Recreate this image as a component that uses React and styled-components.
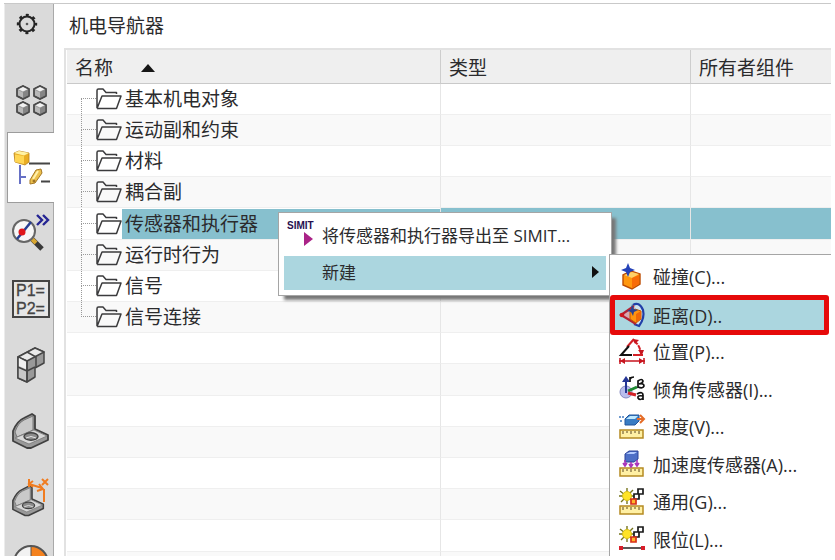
import React from "react";
import styled, { createGlobalStyle, css } from "styled-components";

const Global = createGlobalStyle`
  *, *::before, *::after { box-sizing: border-box; }
  body {
    margin: 0;
    background: #fff;
    color: #2b2b2d;
    font-family: "Open Sans", "Noto Sans CJK SC", sans-serif;
  }
  button { font: inherit; color: inherit; border: 0; padding: 0; margin: 0; background: none; text-align: left; cursor: pointer; }
  svg { display: block; flex: none; overflow: visible; }
`;

const Page = styled.div`
  height: 100vh;
  padding: 3px 4px 4px;
`;

const Frame = styled.div`
  position: relative;
  display: flex;
  height: 100%;
  overflow: hidden;
  border-top: 1px solid #c9c9c9;
`;

const Rail = styled.nav`
  display: flex;
  flex-direction: column;
  width: 50px;
  flex: none;
  background: #dadada;
  border-left: 1px solid #ececec;
`;

const RailButton = styled.button`
  display: flex;
  align-items: center;
  justify-content: center;
  flex: none;
  height: 66px;
  padding: 0 0 6px 3px;
  border-right: 1px solid #a9a9a9;
  ${(p) =>
    p.$kind === "settings" &&
    css`
      height: 64px;
      align-items: flex-start;
      padding: 9px 5px 0 0;
    `}
  ${(p) => p.$kind === "tab" && css`height: 64px; padding: 0 0 0 6px;`}
  ${(p) =>
    p.$active &&
    css`
      height: 71px;
      margin-left: 2px;
      padding: 0 0 0 2px;
      background: #fff;
      border: 1px solid #9c9c9c;
      border-right: 0;
    `}
`;

const Panel = styled.main`
  flex: 1;
  min-width: 0;
  padding-left: 10px;
`;

const Title = styled.h1`
  margin: 0;
  padding-left: 5px;
  height: 44px;
  font-size: 19px;
  line-height: 44px;
  font-weight: 400;
`;

const TableWrap = styled.div`
  border-top: 2px solid #e2e2e2;
  border-left: 2px solid #e2e2e2;
  padding-left: 1px;
`;

const Table = styled.table`
  width: 100%;
  table-layout: fixed;
  border-collapse: separate;
  border-spacing: 0;
  font-size: 19px;
  line-height: 28px;
`;

const Col = styled.col`
  width: ${(p) => p.$width};
`;

const HeadCell = styled.th`
  height: 34px;
  padding: 2px 0 0 8px;
  text-align: left;
  font-weight: 400;
  background: #efefef;
  border-bottom: 1px solid #c9c9c9;
  & + & { border-left: 1px solid #cdcdcd; }
`;

const SortButton = styled.button`
  display: flex;
  align-items: center;
  gap: 28px;
`;

const Cell = styled.td`
  height: 31px;
  padding: 0;
  border-bottom: 1px solid #efefef;
  & + & { border-left: 1px solid #e6e6e6; }
`;

const Row = styled.tr`
  &:nth-child(even) { background: #f9f9f9; }
  &:nth-child(5n) > td { height: 32px; }
  ${(p) =>
    p.$selected &&
    css`
      td + td { background: #87c0ce; }
    `}
`;

const TreeItem = styled.div`
  display: flex;
  align-items: center;
  height: 30px;
`;

const Guide = styled.span`
  display: grid;
  grid-template-rows: 1fr 1fr;
  align-self: stretch;
  width: 15px;
  margin-left: 14px;
  flex: none;
  &::before, &::after { content: ""; border-left: 1px dotted #999; }
  &::before { border-bottom: 1px dotted #999; ${(p) => p.$first && "border-left: 0;"} }
  &::after { ${(p) => p.$last && "border-left: 0;"} }
`;

const TreeLabel = styled.span`
  flex: 1;
  align-self: stretch;
  line-height: 30px;
  padding-left: 3px;
  ${(p) => p.$selected && "background: #87c0ce;"}
`;

const Menu = styled.div`
  position: absolute;
  background: #fff;
  border: 1px solid #a5a5a5;
`;

const ContextMenu = styled(Menu)`
  left: 274px;
  top: 208px;
  width: 334px;
  padding: 4px 5px 5px;
  font-size: 17px;
  box-shadow: 5px 5px 3px -1px #777;
`;

const SubMenu = styled(Menu)`
  left: 605px;
  top: 250px;
  right: 0;
  padding: 4px 3px 4px 1px;
  border-right: 0;
  font-size: 18px;
`;

const MenuItem = styled.button`
  display: flex;
  align-items: center;
  width: 100%;
  height: ${(p) => (p.$tall ? "39px" : "34px")};
  padding-bottom: ${(p) => (p.$tall ? "5px" : "3px")};
  ${(p) => p.$active && "background: #abd6df;"}
`;

const MenuIcon = styled.span`
  display: flex;
  justify-content: center;
  width: 31px;
  margin-right: 7px;
  flex: none;
`;

const MenuText = styled.span`
  flex: 1;
  white-space: nowrap;
`;

const Arrow = styled.span`
  margin-right: 7px;
`;

const SensorItem = styled.button`
  display: flex;
  align-items: center;
  gap: 7px;
  width: 100%;
  height: 37px;
  padding: 0 0 3px 8px;
  white-space: nowrap;
  &:nth-child(even) { height: 38px; }
  ${(p) =>
    p.$marked &&
    css`
      padding: 0 0 0 4px;
      background: #abd6df;
      border: 4px solid #e60a0a;
      border-radius: 2px;
      box-shadow: 0 0 0 1px #e60a0a;
    `}
`;

const FolderIcon = () => (
  <svg width="26" height="22" viewBox="0 0 26 22" fill="none" stroke="#3b3b3d" strokeWidth="1.5" strokeLinejoin="round">
    <path d="M1 20V2.500Q1 1 2.500 1H7l3 3.500h10.500v1.500M1 20.500 6 8h19L20.500 20.500H1" />
  </svg>
);

const GearIcon = () => (
  <svg width="22" height="22" viewBox="0 0 22 22" fill="none" stroke="#252525">
    <circle cx="11" cy="11" r="7.500" strokeWidth="2" />
    <circle cx="11" cy="11" r="9" strokeWidth="2.400" strokeDasharray="3 4.070" strokeDashoffset="1.500" />
    <circle cx="11" cy="11" r="1.300" fill="#555" stroke="none" />
  </svg>
);

const MiniCube = ({ x, y }) => (
  <g transform={`translate(${x} ${y})`} stroke="#4b4b4b" strokeWidth="1.400" strokeLinejoin="round">
    <path d="M1 4 7 1l6 3v7l-6 3-6-3Z" fill="#b8b8b8" />
    <path d="M1 4 7 1l6 3-6 3Z" fill="#f1f1f1" stroke="#777" strokeWidth=".6" />
    <path d="M7 7v7l6-3V4Z" fill="#858585" stroke="none" />
    <path d="M1 4 7 1l6 3v7l-6 3-6-3Z" fill="none" />
  </g>
);

const CubesIcon = () => (
  <svg width="32" height="32" viewBox="0 0 32 32">
    <MiniCube x={0} y={1} />
    <MiniCube x={17} y={1} />
    <MiniCube x={0} y={17} />
    <MiniCube x={17} y={17} />
  </svg>
);

const NavigatorIcon = () => (
  <svg width="36" height="36" viewBox="0 0 36 36">
    <path d="M6 15v19M6 27h6" stroke="#6670c5" strokeWidth="2" fill="none" />
    <path d="M15 13.500h21M27 31.500h9" stroke="#454545" strokeWidth="2" />
    <path d="m0 3 5-2 10 2v9l-4 3L1 12Z" fill="#e9ad24" stroke="#b98219" strokeWidth=".8" />
    <path d="m0 3 5-2 10 2-5 2.500Z" fill="#fff2a4" />
    <path d="M1 4.500 10 6v8l-9-2Z" fill="#ffd653" />
    <path d="m16 30 6-10 5-1 1 4-7 10-5 1Z" fill="#ecc04c" stroke="#a67925" />
    <path d="m19 29 5-8" stroke="#fff0ab" strokeWidth="2" />
    <circle cx="20" cy="31" r="1.500" fill="#9f7426" />
  </svg>
);

const InspectIcon = () => (
  <svg width="38" height="38" viewBox="0 0 38 38" fill="none">
    <path d="m20 25 10 10" stroke="#393939" strokeWidth="5" />
    <path d="m20 25 4 4" stroke="#d9a730" strokeWidth="4" />
    <circle cx="12" cy="17" r="11" fill="#f7f7f7" stroke="#666" strokeWidth="2" />
    <path d="m5 25 14-17" stroke="#263d91" strokeWidth="2.500" />
    <circle cx="10" cy="18" r="3.500" fill="#e0171b" />
    <path d="m25 1 5 5-5 5m6-10 5 5-5 5" stroke="#252593" strokeWidth="2.400" />
  </svg>
);

const ParamsIcon = () => (
  <svg width="38" height="38" viewBox="0 0 38 38">
    <rect x="1" y="1" width="36" height="36" fill="#e6e6e6" stroke="#444" strokeWidth="2" />
    <g fontFamily="Liberation Sans, sans-serif" fontSize="16" fill="#444" stroke="#444" strokeWidth=".3">
      <text x="4" y="16">P1=</text>
      <text x="4" y="34">P2=</text>
    </g>
  </svg>
);

const BlocksIcon = () => (
  <svg width="28" height="36" viewBox="0 0 28 36" stroke="#454545" strokeWidth="1.500" strokeLinejoin="round">
    <path d="m1 10 17-9 9 4v11l-9 5v9l-8 5-9-4Z" fill="#999" />
    <path d="m1 10 17-9 9 4-17 9Z" fill="#e9e9e9" />
    <path d="M1 10v21l9 4V14Z" fill="#c9c9c9" />
    <path d="m1 20 9 4 8-4M10 5l9 5v11M10 14v21" fill="none" />
    <path d="m2 11 7 4v7l-7-3Z" fill="#f1f1f1" stroke="none" />
  </svg>
);

const BracketShape = () => (
  <g stroke="#414141" strokeWidth="1.800" strokeLinejoin="round">
    <path d="M1 25V18Q5 8 12 5l8-4 3 2v13l13 6v5L19 35h-4L1 28Z" fill="#999" />
    <path d="M3 19Q6 10 12 7l9-4v14L5 24Z" fill="#c9c9c9" stroke="#777" strokeWidth="1" />
    <path d="m3 25 19-8 13 6-18 8Z" fill="#d8d8d8" stroke="#777" strokeWidth=".8" />
    <ellipse cx="19" cy="23.500" rx="7" ry="3.700" fill="#8b8b8b" strokeWidth="1.400" />
    <path d="M14 25q5-3 10 0" fill="none" stroke="#e5e5e5" strokeWidth="1" />
  </g>
);

const BracketIcon = () => (
  <svg width="38" height="36" viewBox="0 0 38 36"><BracketShape /></svg>
);

const BracketSizeIcon = () => (
  <svg width="38" height="38" viewBox="0 0 38 38">
    <g transform="translate(0 7) scale(.87)"><BracketShape /></g>
    <path d="M17 9V1m0 5 13 4m-9-7-4 3 4 3m6-3 4 5-6 2M32 24V11M30 1l6 6m0-6-6 6" fill="none" stroke="#f07c20" strokeWidth="2" />
  </svg>
);

const DiscIcon = () => (
  <svg width="38" height="38" viewBox="0 0 38 38">
    <circle cx="19" cy="19" r="17" fill="#f2f2f2" />
    <path d="M19 2a17 17 0 0 1 0 34Z" fill="#f4821f" />
    <path d="M19 2v34" stroke="#555" />
    <circle cx="19" cy="19" r="17" fill="none" stroke="#555" strokeWidth="2" />
  </svg>
);

const SimitIcon = () => (
  <svg width="26" height="28" viewBox="0 0 26 28">
    <text x="0" y="9" fontFamily="Liberation Sans, sans-serif" fontWeight="700" fontSize="10" fill="#26104f">SIMIT</text>
    <path d="m17 12 9 7-9 7Z" fill="#aa2387" />
  </svg>
);

const SensorSvg = ({ children }) => (
  <svg width="27" height="26" viewBox="0 0 27 26">{children}</svg>
);

const CollisionIcon = () => (
  <SensorSvg>
    <path d="m4 12 8-4 9 3v10l-8 5-9-4Z" fill="#ff970e" stroke="#bd4a00" strokeWidth="1.400" />
    <path d="m5 12 8-3 7 2-7 4Z" fill="#ffd169" />
    <path d="M13 15v10l7-4V12Z" fill="#f86b08" />
    <path d="m9 0 2 5 5 2-5 2-2 5-2-5-5-2 5-2Z" fill="#2442b8" />
  </SensorSvg>
);

const DistanceIcon = () => (
  <SensorSvg>
    <path d="M14 3Q20-1 24 8q2 8-4 16l-5-2" fill="#cee2ed" stroke="#203fa8" strokeWidth="2.200" />
    <path d="M15 4 2 13l15 9" fill="#d6a8b1" stroke="#b42133" strokeWidth="2.200" />
    <path d="m11 10 5-3 6 2v8l-5 4-6-4Z" fill="#ff950f" stroke="#c25400" />
    <path d="m17 12 5-3v8l-5 4Z" fill="#f06808" />
    <path d="m13 2 2 5 4 1-4 2-1 4-2-4-4-1 4-2Z" fill="#294292" />
    <circle cx="3" cy="13" r="2.300" fill="#cc1720" />
  </SensorSvg>
);

const PositionIcon = () => (
  <SensorSvg>
    <path d="m8 9 7-8" stroke="#d32026" strokeWidth="2" />
    <path d="M10 8 2 17h11" fill="none" stroke="#111" strokeWidth="2" />
    <path d="M15 3q6 4 7 13" fill="none" stroke="#d32026" strokeWidth="2" strokeDasharray="5 1" />
    <path d="M14 17h10" stroke="#d32026" strokeWidth="2" />
    <path d="M19 12h6l-2 5ZM14 1l6 1-4 4Z" fill="#c7151f" />
    <path d="M0 23h26M1 20v6M25 20v6" stroke="#c7151f" strokeWidth="1.500" />
    <path d="m1 23 5-3v6Zm24 0-5-3v6Z" fill="#c7151f" />
  </SensorSvg>
);

const TiltIcon = () => (
  <SensorSvg>
    <circle cx="7" cy="16" r="6" fill="#b9bdec" stroke="#8588c0" />
    <path d="M7 17V3" stroke="#253695" strokeWidth="2" />
    <path d="m3 6 4-6 4 6Z" fill="#253695" />
    <path d="m9 15 9-4" stroke="#218c34" strokeWidth="3" />
    <path d="m9 17 8 2" stroke="#d42226" strokeWidth="3" />
    <path d="M11 6V1m0 2q1-2 4-2M19 12V5q4-3 5 0 0 2-4 3 5-1 5 2-1 3-6 1M18 18q6-3 6 1v5m0-4q-6-1-5 2 2 3 5 0" stroke="#111" strokeWidth="1.700" fill="none" />
  </SensorSvg>
);

const Ruler = ({ y = 17 }) => (
  <g transform={`translate(1 ${y})`}>
    <path d="M0 0h23v8H0Z" fill="#fff0a4" stroke="#b58a22" strokeWidth="1.500" />
    <path d="M3 1v3m4-3v2m4-2v3m4-3v2m4-2v3" stroke="#5a4723" />
  </g>
);

const SpeedIcon = () => (
  <SensorSvg>
    <Ruler />
    <path d="m6 6 4-4h10v6l-4 4H6Z" fill="#397cc3" stroke="#23549b" />
    <path d="m7 6 4-3h8l-3 3Z" fill="#bee9ff" />
    <path d="M18 6h7m-4-4 4 4-4 4" stroke="#e56c27" strokeWidth="2" fill="none" />
    <path d="M0 4h2m1 0h2M1 8h2" stroke="#4179bf" strokeWidth="1.500" />
  </SensorSvg>
);

const AccelerationIcon = () => (
  <SensorSvg>
    <Ruler />
    <path d="m6 3 4-3h9v8l-4 3H6Z" fill="#4d6fc6" stroke="#2b4299" />
    <path d="m7 3 4-2h7l-3 2Z" fill="#b4ccff" />
    <path d="M6 9v6m6-4v5m6-7v6m-14-3 2 3 2-3m2 1 2 3 2-3m2-1 2 3 2-3" stroke="#a935bb" strokeWidth="1.600" fill="none" />
  </SensorSvg>
);

const Burst = () => (
  <g>
    <path d="M8 0v16M1 3l14 11M0 8h16M2 14 14 2" stroke="#77751d" strokeWidth="1.400" />
    <circle cx="8" cy="8" r="4.500" fill="#ffe326" stroke="#d5bd19" />
    <g fill="#fff" stroke="#191919" strokeWidth="1.700">
      <path d="M19 1h5v5h-5ZM15 6h5v5h-5Z" />
      <path d="M12 11h5v5h-5Z" fill="#ffb52c" stroke="#d72f18" />
    </g>
  </g>
);

const GenericIcon = () => (
  <SensorSvg><Burst /><Ruler y={18} /></SensorSvg>
);

const LimitIcon = () => (
  <SensorSvg>
    <Burst />
    <path d="M2 22h22" stroke="#222" strokeWidth="1.500" />
    <path d="M0 20h4v4H0Zm22 0h4v4h-4Z" fill="#d81e2a" />
  </SensorSvg>
);

const railItems = [
  { label: "设置", Icon: GearIcon, kind: "settings" },
  { label: "装配导航器", Icon: CubesIcon, kind: "tab" },
  { label: "机电导航器", Icon: NavigatorIcon, active: true },
  { label: "运行时察看器", Icon: InspectIcon },
  { label: "参数", Icon: ParamsIcon },
  { label: "重用库", Icon: BlocksIcon },
  { label: "部件导航器", Icon: BracketIcon },
  { label: "尺寸", Icon: BracketSizeIcon },
  { label: "历史记录", Icon: DiscIcon },
];

const folders = ["基本机电对象", "运动副和约束", "材料", "耦合副", "传感器和执行器", "运行时行为", "信号", "信号连接"];
const rows = [...folders, ...Array(8).fill(null)];
const selected = "传感器和执行器";

const sensors = [
  ["碰撞(C)...", CollisionIcon],
  ["距离(D)..", DistanceIcon],
  ["位置(P)...", PositionIcon],
  ["倾角传感器(I)...", TiltIcon],
  ["速度(V)...", SpeedIcon],
  ["加速度传感器(A)...", AccelerationIcon],
  ["通用(G)...", GenericIcon],
  ["限位(L)...", LimitIcon],
];

export default function App() {
  return (
    <Page>
      <Global />
      <Frame>
        <Rail>
          {railItems.map(({ label, Icon, kind, active }) => (
            <RailButton key={label} aria-label={label} $kind={kind} $active={active}>
              <Icon />
            </RailButton>
          ))}
        </Rail>
        <Panel>
          <Title>机电导航器</Title>
          <TableWrap>
            <Table>
              <colgroup>
                <Col $width="373px" />
                <Col $width="250px" />
                <Col $width="auto" />
              </colgroup>
              <thead>
                <tr>
                  <HeadCell aria-sort="ascending">
                    <SortButton>
                      名称
                      <svg width="14" height="8" viewBox="0 0 14 8"><path d="M7 0 14 8H0Z" fill="#161616" /></svg>
                    </SortButton>
                  </HeadCell>
                  <HeadCell>类型</HeadCell>
                  <HeadCell>所有者组件</HeadCell>
                </tr>
              </thead>
              <tbody>
                {rows.map((name, i) => (
                  <Row key={i} $selected={name === selected}>
                    <Cell>
                      {name && (
                        <TreeItem>
                          <Guide $first={i === 0} $last={i === folders.length - 1} />
                          <FolderIcon />
                          <TreeLabel $selected={name === selected}>{name}</TreeLabel>
                        </TreeItem>
                      )}
                    </Cell>
                    <Cell />
                    <Cell />
                  </Row>
                ))}
              </tbody>
            </Table>
          </TableWrap>
        </Panel>
        <ContextMenu role="menu">
          <MenuItem role="menuitem" $tall>
            <MenuIcon><SimitIcon /></MenuIcon>
            <MenuText>将传感器和执行器导出至 SIMIT...</MenuText>
          </MenuItem>
          <MenuItem role="menuitem" aria-haspopup="menu" aria-expanded="true" $active>
            <MenuIcon />
            <MenuText>新建</MenuText>
            <Arrow><svg width="7" height="12" viewBox="0 0 7 12"><path d="M0 0 7 6 0 12Z" fill="#111" /></svg></Arrow>
          </MenuItem>
        </ContextMenu>
        <SubMenu role="menu">
          {sensors.map(([label, Icon], i) => (
            <SensorItem key={label} role="menuitem" $marked={i === 1}>
              <Icon />
              {label}
            </SensorItem>
          ))}
        </SubMenu>
      </Frame>
    </Page>
  );
}
